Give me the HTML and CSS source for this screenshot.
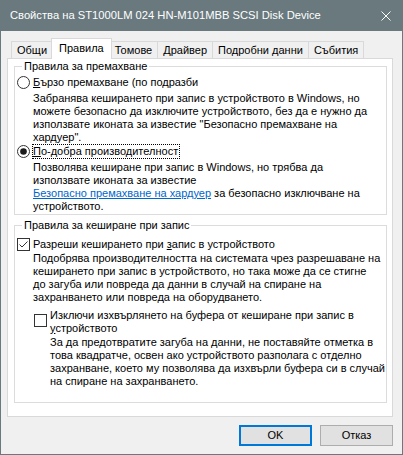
FILE: index.html
```html
<!DOCTYPE html>
<html lang="bg">
<head>
<meta charset="utf-8">
<title>Свойства</title>
<link rel="stylesheet" href="styles.css">
</head>
<body>
<div class="window">
  <div class="titlebar">
    <span class="title">Свойства на ST1000LM 024 HN-M101MBB SCSI Disk Device</span>
    <span class="close">
      <svg width="10" height="10" viewBox="0 0 10 10"><path d="M0.5 0.5L9.5 9.5M9.5 0.5L0.5 9.5" stroke="#fff" stroke-width="1" fill="none"/></svg>
    </span>
  </div>

  <div class="tabs">
    <div class="tab">Общи</div>
    <div class="tab selected">Правила</div>
    <div class="tab">Томове</div>
    <div class="tab">Драйвер</div>
    <div class="tab">Подробни данни</div>
    <div class="tab">Събития</div>
  </div>

  <div class="panel">
    <fieldset class="group group-remove">
      <legend>Правила за премахване</legend>
      <div class="option opt-quick">
        <svg class="radio" width="13" height="13" viewBox="0 0 13 13"><circle cx="6.5" cy="6.5" r="6" fill="#fff" stroke="#333"/></svg>
        <span class="label"><u>Б</u>ързо премахване (по подразби</span>
      </div>
      <p class="desc desc-quick">Забранява кеширането при запис в устройството в Windows, но<br>можете безопасно да изключите устройството, без да е нужно да<br>използвате иконата за известие "Безопасно премахване на<br>хардуер".</p>
      <div class="option opt-better">
        <svg class="radio" width="13" height="13" viewBox="0 0 13 13"><circle cx="6.5" cy="6.5" r="6" fill="#fff" stroke="#333"/><circle cx="6.5" cy="6.5" r="3.3" fill="#1a1a1a"/></svg>
        <span class="label focused"><u>П</u>о-добра производителност</span>
      </div>
      <p class="desc desc-better">Позволява кеширане при запис в Windows, но трябва да<br>използвате иконата за известие<br><a href="#" class="link">Безопасно премахване на хардуер</a> за безопасно изключване на<br>устройството.</p>
    </fieldset>

    <fieldset class="group group-cache">
      <legend>Правила за кеширане при запис</legend>
      <div class="option opt-enable">
        <svg class="check" width="13" height="13" viewBox="0 0 13 13"><rect x="0.5" y="0.5" width="12" height="12" fill="#fff" stroke="#333"/><polyline points="2.5,6.5 5,9 10.5,3.5" fill="none" stroke="#333" stroke-width="1"/></svg>
        <span class="label">Разреши кеширането при <u>з</u>апис в устройството</span>
      </div>
      <p class="desc desc-enable">Подобрява производителността на системата чрез разрешаване на<br>кеширането при запис в устройството, но така може да се стигне<br>до загуба или повреда да данни в случай на спиране на<br>захранването или повреда на оборудването.</p>
      <div class="sub">
        <div class="option opt-flush">
          <svg class="check" width="13" height="13" viewBox="0 0 13 13"><rect x="0.5" y="0.5" width="12" height="12" fill="#fff" stroke="#333"/></svg>
          <span class="label">Изключи изхвърлянето на буфера от кеширане при запис в<br><u>у</u>стройството</span>
        </div>
        <p class="desc desc-flush">За да предотвратите загуба на данни, не поставяйте отметка в<br>това квадратче, освен ако устройството разполага с отделно<br>захранване, което му позволява да изхвърли буфера си в случай<br>на спиране на захранването.</p>
      </div>
    </fieldset>
  </div>

  <div class="buttons">
    <button class="btn default">OK</button>
    <button class="btn">Отказ</button>
  </div>
</div>
</body>
</html>
```
FILE: styles.css
```css
html, body {
  margin: 0;
  padding: 0;
  background: #f0f0f0;
}

body {
  font-family: "Liberation Sans", Arial, sans-serif;
  font-size: 11px;
  line-height: 13px;
  color: #000;
}

.window {
  width: 403px;
  height: 455px;
  box-sizing: border-box;
  border: 1px solid #69797e;
  border-top: 0;
  background: #f0f0f0;
  display: flex;
  flex-direction: column;
}

/* Title bar */
.titlebar {
  height: 31px;
  flex: none;
  background: #69797e;
  display: flex;
  align-items: center;
  color: #fff;
}

.title {
  padding-left: 9px;
  font-size: 11.2px;
  white-space: nowrap;
  flex: 1;
}

.close {
  width: 32px;
  height: 31px;
  display: flex;
  align-items: center;
  justify-content: center;
}

.close svg {
  display: block;
}

/* Tabs */
.tabs {
  display: flex;
  align-items: flex-end;
  padding: 7px 0 0 10px;
  height: 20px;
  flex: none;
}

.tab {
  height: 17px;
  box-sizing: border-box;
  border: 1px solid #d9d9d9;
  border-bottom: 0;
  background: #f0f0f0;
  padding: 0 5px;
  margin-left: -1px;
  line-height: 16px;
  white-space: nowrap;
}

.tab:first-child {
  margin-left: 0;
}

.tab.selected {
  position: relative;
  z-index: 1;
  height: 21px;
  margin: 0 -2px -1px -2px;
  padding: 0 7px;
  background: #fff;
  line-height: 18px;
}

/* Panel */
.panel {
  flex: none;
  box-sizing: border-box;
  width: 386px;
  height: 359px;
  margin-left: 6px;
  border: 1px solid #d9d9d9;
  background: #fff;
  padding: 1px 5px 0 6px;
}

.group {
  margin: 0;
  padding: 0 0 1px 2px;
  border: 1px solid #dcdcdc;
  min-width: 0;
}

.group legend {
  margin-left: 5px;
  padding: 0 2px;
  line-height: 13px;
}

.group-cache {
  margin-top: 4px;
  padding-bottom: 14px;
}

.option {
  display: flex;
  align-items: center;
  white-space: nowrap;
}

.option svg {
  display: block;
  flex: none;
}

.option .label {
  margin-left: 3px;
}

.label.focused {
  border: 1px dotted #000;
  margin-left: 2px;
  padding-right: 1px;
}

.desc {
  margin: 0 0 0 16px;
  white-space: nowrap;
}

.opt-quick { margin-top: 3px; }
.desc-quick { margin-top: 3px; }
.opt-better { margin-top: 0; }
.desc-better { margin-top: 2px; }

.opt-enable { margin-top: 6px; }
.desc-enable { margin-top: 1px; }

.sub {
  margin-left: 17px;
  margin-top: 5px;
}

.opt-flush {
  align-items: flex-start;
}

.opt-flush svg {
  margin-top: 5px;
}

.desc-flush {
  margin-top: 1px;
}

.link {
  color: #0066cc;
  text-decoration: underline;
}

/* Buttons */
.buttons {
  display: flex;
  justify-content: flex-end;
  gap: 8px;
  margin-top: 8px;
  padding-right: 9px;
}

.btn {
  width: 73px;
  height: 21px;
  box-sizing: border-box;
  border: 1px solid #adadad;
  background: #e1e1e1;
  font-family: "Liberation Sans", Arial, sans-serif;
  font-size: 11px;
  font-weight: normal;
  line-height: 13px;
  color: #000;
  padding: 0;
  margin: 0;
}

.btn.default {
  border: 2px solid #0078d7;
}
```
